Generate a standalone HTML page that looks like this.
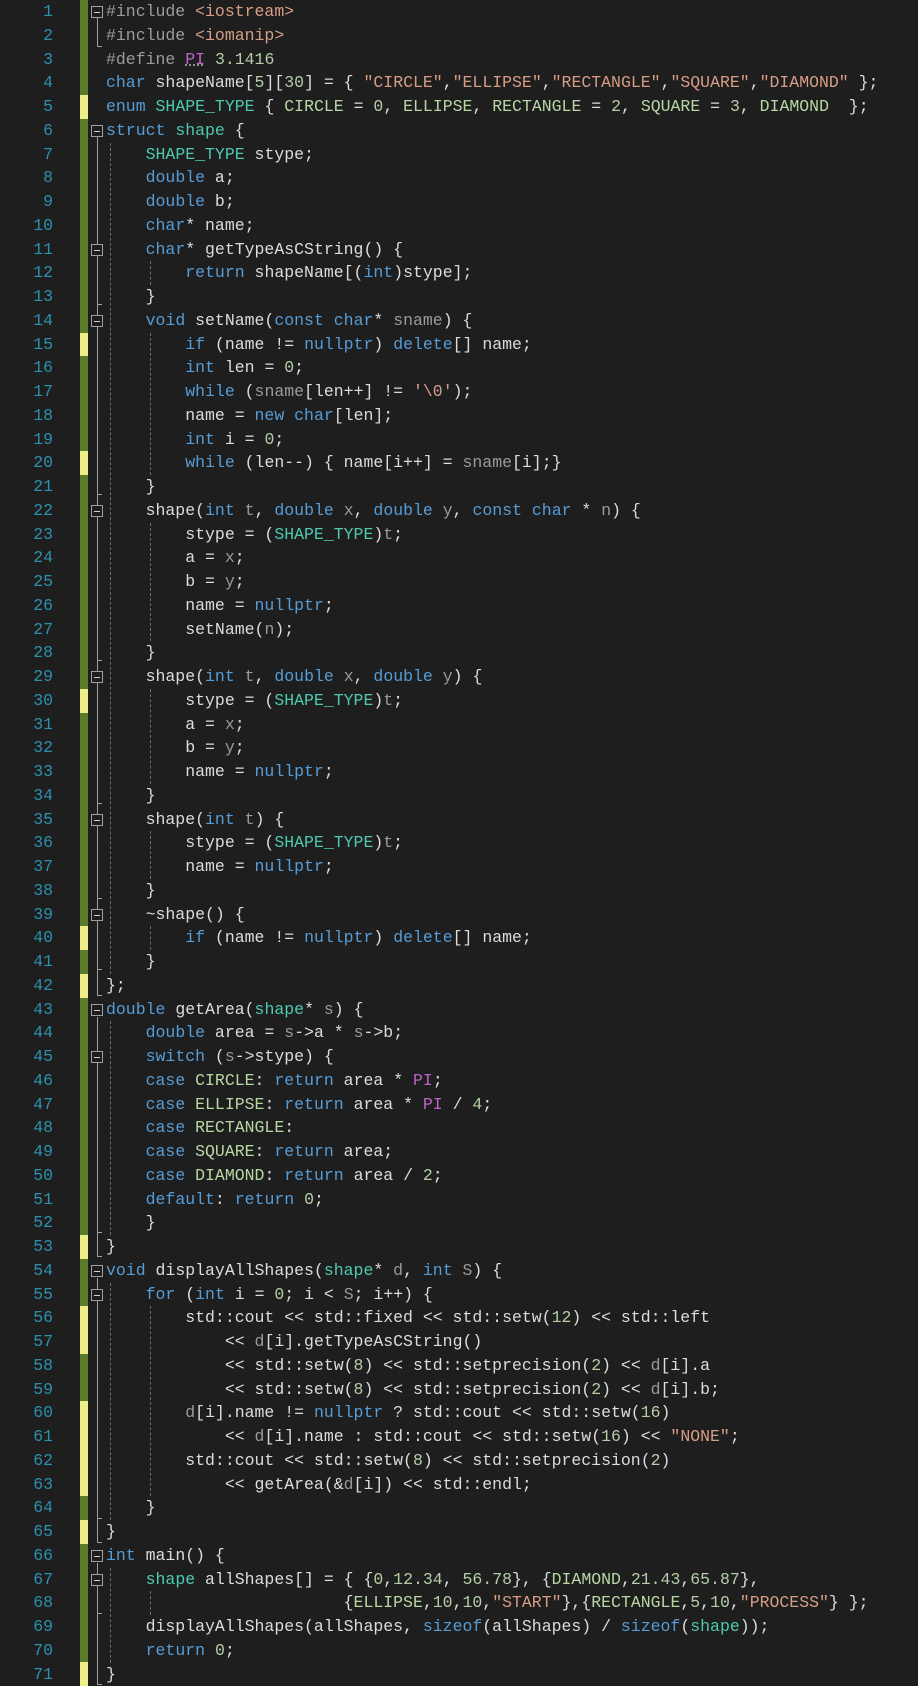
<!DOCTYPE html>
<html><head><meta charset="utf-8"><style>
html,body{margin:0;padding:0;background:#1e1e1e;}
body{width:918px;height:1686px;position:relative;overflow:hidden;font-family:"Liberation Mono",monospace;font-size:16.5px;color:#dcdcdc;}
#nums{position:absolute;left:0;top:0;width:53px;text-align:right;color:#2b91af;}
#code{position:absolute;left:106px;top:0;}
.l{height:23.75px;line-height:23.75px;white-space:pre;}
.k{color:#569cd6}.t{color:#4ec9b0}.s{color:#d69d85}.n{color:#b5cea8}.e{color:#b8d7a3}.p{color:#9b9b9b}.m{color:#bd63c5}.g{color:#9a9a9a}
.bar{position:absolute;left:80px;width:8px;background:#5b7a2b;}
.y{position:absolute;left:80px;width:8px;height:23.75px;background:#eeee88;}
.v{position:absolute;left:97px;width:0;border-left:1px solid #a0a0a0;}
.tk{position:absolute;left:97px;width:5px;height:0;border-top:1px solid #a0a0a0;}
.bx{position:absolute;left:91px;width:10px;height:10px;border:1px solid #a0a0a0;background:#1e1e1e;}
.bx:after{content:"";position:absolute;left:2px;top:5px;width:6px;height:1px;background:#d0d0d0;}
.gd{position:absolute;width:0;border-left:1px dashed #6a6a6a;}
</style></head><body>
<div class="bar" style="top:0;height:1686px"></div>
<div class="y" style="top:95px"></div>
<div class="y" style="top:332.5px"></div>
<div class="y" style="top:451.25px"></div>
<div class="y" style="top:688.75px"></div>
<div class="y" style="top:926.25px"></div>
<div class="y" style="top:973.75px"></div>
<div class="y" style="top:1235px"></div>
<div class="y" style="top:1306.25px"></div>
<div class="y" style="top:1330px"></div>
<div class="y" style="top:1401.25px"></div>
<div class="y" style="top:1425px"></div>
<div class="y" style="top:1448.75px"></div>
<div class="y" style="top:1472.5px"></div>
<div class="y" style="top:1520px"></div>
<div class="y" style="top:1662.25px"></div>

<div class="v" style="top:17px;height:30px"></div><div class="tk" style="top:46px"></div>
<div class="v" style="top:136px;height:860px"></div><div class="tk" style="top:995px"></div>
<div class="tk" style="top:304px"></div>
<div class="tk" style="top:494px"></div>
<div class="tk" style="top:660px"></div>
<div class="tk" style="top:803px"></div>
<div class="tk" style="top:898px"></div>
<div class="tk" style="top:969px"></div>
<div class="v" style="top:1017px;height:240px"></div><div class="tk" style="top:1256px"></div>
<div class="tk" style="top:1232px"></div>
<div class="v" style="top:1278px;height:265px"></div><div class="tk" style="top:1542px"></div>
<div class="tk" style="top:1518px"></div>
<div class="v" style="top:1563px;height:121px"></div><div class="tk" style="top:1684px"></div>
<div class="tk" style="top:1613px"></div>

<div class="bx" style="top:6px"></div>
<div class="bx" style="top:124.75px"></div>
<div class="bx" style="top:243.5px"></div>
<div class="bx" style="top:314.75px"></div>
<div class="bx" style="top:504.75px"></div>
<div class="bx" style="top:671px"></div>
<div class="bx" style="top:813.5px"></div>
<div class="bx" style="top:908.5px"></div>
<div class="bx" style="top:1003.5px"></div>
<div class="bx" style="top:1051px"></div>
<div class="bx" style="top:1264.75px"></div>
<div class="bx" style="top:1288.5px"></div>
<div class="bx" style="top:1549.75px"></div>
<div class="bx" style="top:1573.5px"></div>

<div class="gd" style="left:110px;top:142.5px;height:831px"></div>
<div class="gd" style="left:110px;top:1021.25px;height:213.75px"></div>
<div class="gd" style="left:110px;top:1282.5px;height:237.5px"></div>
<div class="gd" style="left:110px;top:1567.5px;height:95px"></div>
<div class="gd" style="left:150px;top:261.25px;height:23.75px"></div>
<div class="gd" style="left:150px;top:332.5px;height:142.5px"></div>
<div class="gd" style="left:150px;top:522.5px;height:118.75px"></div>
<div class="gd" style="left:150px;top:688.75px;height:95px"></div>
<div class="gd" style="left:150px;top:831.25px;height:47.5px"></div>
<div class="gd" style="left:150px;top:926.25px;height:23.75px"></div>
<div class="gd" style="left:150px;top:1306.25px;height:190px"></div>
<div class="gd" style="left:150px;top:1591.25px;height:23.75px"></div>

<div id="nums">
<div class="l">1</div><div class="l">2</div><div class="l">3</div><div class="l">4</div><div class="l">5</div><div class="l">6</div><div class="l">7</div><div class="l">8</div><div class="l">9</div><div class="l">10</div>
<div class="l">11</div><div class="l">12</div><div class="l">13</div><div class="l">14</div><div class="l">15</div><div class="l">16</div><div class="l">17</div><div class="l">18</div><div class="l">19</div><div class="l">20</div>
<div class="l">21</div><div class="l">22</div><div class="l">23</div><div class="l">24</div><div class="l">25</div><div class="l">26</div><div class="l">27</div><div class="l">28</div><div class="l">29</div><div class="l">30</div>
<div class="l">31</div><div class="l">32</div><div class="l">33</div><div class="l">34</div><div class="l">35</div><div class="l">36</div><div class="l">37</div><div class="l">38</div><div class="l">39</div><div class="l">40</div>
<div class="l">41</div><div class="l">42</div><div class="l">43</div><div class="l">44</div><div class="l">45</div><div class="l">46</div><div class="l">47</div><div class="l">48</div><div class="l">49</div><div class="l">50</div>
<div class="l">51</div><div class="l">52</div><div class="l">53</div><div class="l">54</div><div class="l">55</div><div class="l">56</div><div class="l">57</div><div class="l">58</div><div class="l">59</div><div class="l">60</div>
<div class="l">61</div><div class="l">62</div><div class="l">63</div><div class="l">64</div><div class="l">65</div><div class="l">66</div><div class="l">67</div><div class="l">68</div><div class="l">69</div><div class="l">70</div>
<div class="l">71</div>
</div>

<div id="code">
<div class="l"><span class="p">#include</span> <span class="s">&lt;iostream&gt;</span></div>
<div class="l"><span class="p">#include</span> <span class="s">&lt;iomanip&gt;</span></div>
<div class="l"><span class="p">#define</span> <span class="m" style="text-decoration:underline dotted #aaa">PI</span> <span class="n">3.1416</span></div>
<div class="l"><span class="k">char</span> shapeName[<span class="n">5</span>][<span class="n">30</span>] = { <span class="s">"CIRCLE"</span>,<span class="s">"ELLIPSE"</span>,<span class="s">"RECTANGLE"</span>,<span class="s">"SQUARE"</span>,<span class="s">"DIAMOND"</span> };</div>
<div class="l"><span class="k">enum</span> <span class="t">SHAPE_TYPE</span> { <span class="e">CIRCLE</span> = <span class="n">0</span>, <span class="e">ELLIPSE</span>, <span class="e">RECTANGLE</span> = <span class="n">2</span>, <span class="e">SQUARE</span> = <span class="n">3</span>, <span class="e">DIAMOND</span>  };</div>
<div class="l"><span class="k">struct</span> <span class="t">shape</span> {</div>
<div class="l">    <span class="t">SHAPE_TYPE</span> stype;</div>
<div class="l">    <span class="k">double</span> a;</div>
<div class="l">    <span class="k">double</span> b;</div>
<div class="l">    <span class="k">char</span>* name;</div>
<div class="l">    <span class="k">char</span>* getTypeAsCString() {</div>
<div class="l">        <span class="k">return</span> shapeName[(<span class="k">int</span>)stype];</div>
<div class="l">    }</div>
<div class="l">    <span class="k">void</span> setName(<span class="k">const</span> <span class="k">char</span>* <span class="g">sname</span>) {</div>
<div class="l">        <span class="k">if</span> (name != <span class="k">nullptr</span>) <span class="k">delete</span>[] name;</div>
<div class="l">        <span class="k">int</span> len = <span class="n">0</span>;</div>
<div class="l">        <span class="k">while</span> (<span class="g">sname</span>[len++] != <span class="s">'\0'</span>);</div>
<div class="l">        name = <span class="k">new</span> <span class="k">char</span>[len];</div>
<div class="l">        <span class="k">int</span> i = <span class="n">0</span>;</div>
<div class="l">        <span class="k">while</span> (len--) { name[i++] = <span class="g">sname</span>[i];}</div>
<div class="l">    }</div>
<div class="l">    shape(<span class="k">int</span> <span class="g">t</span>, <span class="k">double</span> <span class="g">x</span>, <span class="k">double</span> <span class="g">y</span>, <span class="k">const</span> <span class="k">char</span> * <span class="g">n</span>) {</div>
<div class="l">        stype = (<span class="t">SHAPE_TYPE</span>)<span class="g">t</span>;</div>
<div class="l">        a = <span class="g">x</span>;</div>
<div class="l">        b = <span class="g">y</span>;</div>
<div class="l">        name = <span class="k">nullptr</span>;</div>
<div class="l">        setName(<span class="g">n</span>);</div>
<div class="l">    }</div>
<div class="l">    shape(<span class="k">int</span> <span class="g">t</span>, <span class="k">double</span> <span class="g">x</span>, <span class="k">double</span> <span class="g">y</span>) {</div>
<div class="l">        stype = (<span class="t">SHAPE_TYPE</span>)<span class="g">t</span>;</div>
<div class="l">        a = <span class="g">x</span>;</div>
<div class="l">        b = <span class="g">y</span>;</div>
<div class="l">        name = <span class="k">nullptr</span>;</div>
<div class="l">    }</div>
<div class="l">    shape(<span class="k">int</span> <span class="g">t</span>) {</div>
<div class="l">        stype = (<span class="t">SHAPE_TYPE</span>)<span class="g">t</span>;</div>
<div class="l">        name = <span class="k">nullptr</span>;</div>
<div class="l">    }</div>
<div class="l">    ~shape() {</div>
<div class="l">        <span class="k">if</span> (name != <span class="k">nullptr</span>) <span class="k">delete</span>[] name;</div>
<div class="l">    }</div>
<div class="l">};</div>
<div class="l"><span class="k">double</span> getArea(<span class="t">shape</span>* <span class="g">s</span>) {</div>
<div class="l">    <span class="k">double</span> area = <span class="g">s</span>-&gt;a * <span class="g">s</span>-&gt;b;</div>
<div class="l">    <span class="k">switch</span> (<span class="g">s</span>-&gt;stype) {</div>
<div class="l">    <span class="k">case</span> <span class="e">CIRCLE</span>: <span class="k">return</span> area * <span class="m">PI</span>;</div>
<div class="l">    <span class="k">case</span> <span class="e">ELLIPSE</span>: <span class="k">return</span> area * <span class="m">PI</span> / <span class="n">4</span>;</div>
<div class="l">    <span class="k">case</span> <span class="e">RECTANGLE</span>:</div>
<div class="l">    <span class="k">case</span> <span class="e">SQUARE</span>: <span class="k">return</span> area;</div>
<div class="l">    <span class="k">case</span> <span class="e">DIAMOND</span>: <span class="k">return</span> area / <span class="n">2</span>;</div>
<div class="l">    <span class="k">default</span>: <span class="k">return</span> <span class="n">0</span>;</div>
<div class="l">    }</div>
<div class="l">}</div>
<div class="l"><span class="k">void</span> displayAllShapes(<span class="t">shape</span>* <span class="g">d</span>, <span class="k">int</span> <span class="g">S</span>) {</div>
<div class="l">    <span class="k">for</span> (<span class="k">int</span> i = <span class="n">0</span>; i &lt; <span class="g">S</span>; i++) {</div>
<div class="l">        std::cout &lt;&lt; std::fixed &lt;&lt; std::setw(<span class="n">12</span>) &lt;&lt; std::left</div>
<div class="l">            &lt;&lt; <span class="g">d</span>[i].getTypeAsCString()</div>
<div class="l">            &lt;&lt; std::setw(<span class="n">8</span>) &lt;&lt; std::setprecision(<span class="n">2</span>) &lt;&lt; <span class="g">d</span>[i].a</div>
<div class="l">            &lt;&lt; std::setw(<span class="n">8</span>) &lt;&lt; std::setprecision(<span class="n">2</span>) &lt;&lt; <span class="g">d</span>[i].b;</div>
<div class="l">        <span class="g">d</span>[i].name != <span class="k">nullptr</span> ? std::cout &lt;&lt; std::setw(<span class="n">16</span>)</div>
<div class="l">            &lt;&lt; <span class="g">d</span>[i].name : std::cout &lt;&lt; std::setw(<span class="n">16</span>) &lt;&lt; <span class="s">"NONE"</span>;</div>
<div class="l">        std::cout &lt;&lt; std::setw(<span class="n">8</span>) &lt;&lt; std::setprecision(<span class="n">2</span>)</div>
<div class="l">            &lt;&lt; getArea(&amp;<span class="g">d</span>[i]) &lt;&lt; std::endl;</div>
<div class="l">    }</div>
<div class="l">}</div>
<div class="l"><span class="k">int</span> main() {</div>
<div class="l">    <span class="t">shape</span> allShapes[] = { {<span class="n">0</span>,<span class="n">12.34</span>, <span class="n">56.78</span>}, {<span class="e">DIAMOND</span>,<span class="n">21.43</span>,<span class="n">65.87</span>},</div>
<div class="l">                        {<span class="e">ELLIPSE</span>,<span class="n">10</span>,<span class="n">10</span>,<span class="s">"START"</span>},{<span class="e">RECTANGLE</span>,<span class="n">5</span>,<span class="n">10</span>,<span class="s">"PROCESS"</span>} };</div>
<div class="l">    displayAllShapes(allShapes, <span class="k">sizeof</span>(allShapes) / <span class="k">sizeof</span>(<span class="t">shape</span>));</div>
<div class="l">    <span class="k">return</span> <span class="n">0</span>;</div>
<div class="l">}</div>
</div>
</body></html>
